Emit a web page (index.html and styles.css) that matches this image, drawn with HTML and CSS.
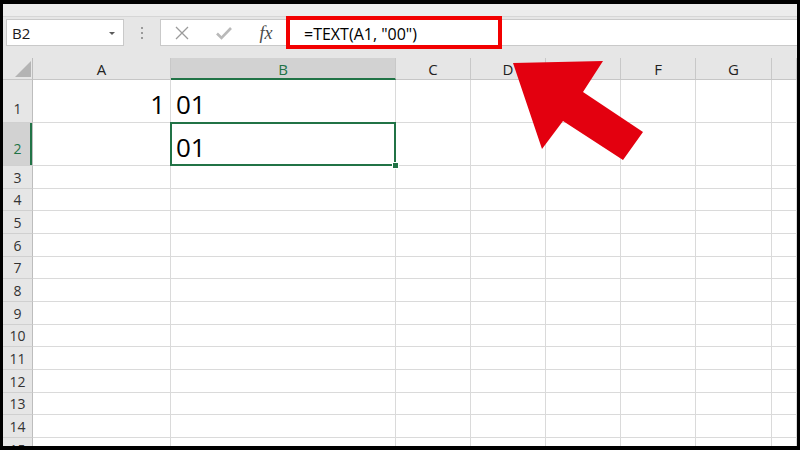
FILE: index.html
```html
<!DOCTYPE html>
<html>
<head>
<meta charset="utf-8">
<title>TEXT function</title>
<link rel="stylesheet" href="styles.css">
</head>
<body>
<div class="app">
  <div class="topstrip"></div>
  <div class="fbar">
    <div class="namebox"><span class="ref">B2</span><span class="caret"></span></div>
    <div class="grip"><i></i><i></i><i></i></div>
    <div class="formula">
      <div class="btn">
        <svg width="16" height="16" viewBox="0 0 16 16"><path d="M2 2 L14 14 M14 2 L2 14" stroke="#9b9b9b" stroke-width="1.3" fill="none"/></svg>
      </div>
      <div class="btn">
        <svg width="18" height="14" viewBox="0 0 18 14"><path d="M2 7.5 L6.5 12 L16 2" stroke="#b9b9b9" stroke-width="2.6" fill="none"/></svg>
      </div>
      <div class="btn fx">fx</div>
      <div class="input">=TEXT(A1, "00")</div>
      <div class="highlight"></div>
    </div>
  </div>
  <div class="sheet">
    <div class="corner"><span class="tri"></span></div>
    <div class="ch">A</div><div class="ch active">B</div><div class="ch">C</div><div class="ch">D</div><div class="ch">E</div><div class="ch">F</div><div class="ch">G</div><div class="ch"></div>

    <div class="rh tall">1</div><div class="c num">1</div><div class="c txt">01</div><div class="c"></div><div class="c"></div><div class="c"></div><div class="c"></div><div class="c"></div><div class="c"></div>
    <div class="rh tall active">2</div><div class="c"></div><div class="c txt sel">01</div><div class="c"></div><div class="c"></div><div class="c"></div><div class="c"></div><div class="c"></div><div class="c"></div>
    <div class="rh">3</div><div class="c"></div><div class="c"></div><div class="c"></div><div class="c"></div><div class="c"></div><div class="c"></div><div class="c"></div><div class="c"></div>
    <div class="rh">4</div><div class="c"></div><div class="c"></div><div class="c"></div><div class="c"></div><div class="c"></div><div class="c"></div><div class="c"></div><div class="c"></div>
    <div class="rh">5</div><div class="c"></div><div class="c"></div><div class="c"></div><div class="c"></div><div class="c"></div><div class="c"></div><div class="c"></div><div class="c"></div>
    <div class="rh">6</div><div class="c"></div><div class="c"></div><div class="c"></div><div class="c"></div><div class="c"></div><div class="c"></div><div class="c"></div><div class="c"></div>
    <div class="rh">7</div><div class="c"></div><div class="c"></div><div class="c"></div><div class="c"></div><div class="c"></div><div class="c"></div><div class="c"></div><div class="c"></div>
    <div class="rh">8</div><div class="c"></div><div class="c"></div><div class="c"></div><div class="c"></div><div class="c"></div><div class="c"></div><div class="c"></div><div class="c"></div>
    <div class="rh">9</div><div class="c"></div><div class="c"></div><div class="c"></div><div class="c"></div><div class="c"></div><div class="c"></div><div class="c"></div><div class="c"></div>
    <div class="rh">10</div><div class="c"></div><div class="c"></div><div class="c"></div><div class="c"></div><div class="c"></div><div class="c"></div><div class="c"></div><div class="c"></div>
    <div class="rh">11</div><div class="c"></div><div class="c"></div><div class="c"></div><div class="c"></div><div class="c"></div><div class="c"></div><div class="c"></div><div class="c"></div>
    <div class="rh">12</div><div class="c"></div><div class="c"></div><div class="c"></div><div class="c"></div><div class="c"></div><div class="c"></div><div class="c"></div><div class="c"></div>
    <div class="rh">13</div><div class="c"></div><div class="c"></div><div class="c"></div><div class="c"></div><div class="c"></div><div class="c"></div><div class="c"></div><div class="c"></div>
    <div class="rh">14</div><div class="c"></div><div class="c"></div><div class="c"></div><div class="c"></div><div class="c"></div><div class="c"></div><div class="c"></div><div class="c"></div>
    <div class="rh">15</div><div class="c"></div><div class="c"></div><div class="c"></div><div class="c"></div><div class="c"></div><div class="c"></div><div class="c"></div><div class="c"></div>
  </div>
</div>
<svg class="arrow" width="800" height="450" viewBox="0 0 800 450">
  <polygon points="513,63 603,61 583,92 643,132 623,160 563,121 542,149" fill="#e3000f"/>
</svg>
</body>
</html>
```

FILE: styles.css
```css
html, body {
  margin: 0;
  padding: 0;
}
body {
  background: #000;
  width: 800px;
  height: 450px;
  overflow: hidden;
  position: relative;
  font-family: "Open Sans", "Noto Sans", sans-serif;
}
.app {
  margin: 4px 3px;
  width: 794px;
  height: 442px;
  overflow: hidden;
  background: #e6e6e6;
  display: flex;
  flex-direction: column;
}
.topstrip {
  height: 12px;
  background: #ececec;
  border-bottom: 1px solid #d6d6d6;
  flex: none;
}
.fbar {
  height: 41px;
  box-sizing: border-box;
  padding: 2px 0 0 3px;
  display: flex;
  align-items: flex-start;
  flex: none;
  background: #e6e6e6;
}
.namebox {
  width: 118px;
  height: 27px;
  box-sizing: border-box;
  background: #fff;
  border: 1px solid #c9c9c9;
  display: flex;
  align-items: center;
  justify-content: space-between;
  padding: 1px 8px 0 5px;
}
.ref {
  font-size: 15px;
  line-height: 1;
  color: #1a1a1a;
}
.caret {
  width: 0;
  height: 0;
  border-left: 3.5px solid transparent;
  border-right: 3.5px solid transparent;
  border-top: 3.5px solid #5a5a5a;
}
.grip {
  width: 36px;
  height: 27px;
  display: flex;
  flex-direction: column;
  align-items: center;
  justify-content: center;
  gap: 3px;
}
.grip i {
  display: block;
  width: 2px;
  height: 2px;
  background: #9a9a9a;
}
.formula {
  flex: 1;
  height: 27px;
  box-sizing: border-box;
  background: #fff;
  border: 1px solid #c9c9c9;
  border-right: none;
  display: flex;
  align-items: center;
  position: relative;
}
.btn {
  width: 42px;
  height: 25px;
  display: flex;
  align-items: center;
  justify-content: center;
  flex: none;
}
.fx {
  font-family: "Liberation Serif", "DejaVu Serif", serif;
  font-style: italic;
  font-size: 18px;
  color: #4a4a4a;
  padding-top: 1px;
  box-sizing: border-box;
}
.input {
  flex: 1;
  font-size: 16px;
  line-height: 1;
  color: #000;
  padding: 2px 0 0 17px;
  white-space: pre;
}
.highlight {
  position: absolute;
  left: 125px;
  top: -4px;
  width: 216px;
  height: 33px;
  box-sizing: border-box;
  border: 4.5px solid #f20000;
}
.sheet {
  flex: 1;
  display: grid;
  grid-template-columns: 30px 138px 225px 75px 75px 75px 75px 76px 1fr;
  grid-template-rows: 22px 43px 43px;
  grid-auto-rows: 22.67px;
  background: #fff;
}
.corner {
  background: #e6e6e6;
  border-right: 1px solid #bdbdbd;
  border-bottom: 1px solid #c6c6c6;
  display: flex;
  align-items: flex-end;
  justify-content: flex-end;
  padding: 0 1px 2px 0;
}
.tri {
  width: 0;
  height: 0;
  border-left: 16px solid transparent;
  border-bottom: 16px solid #b4b4b4;
}
.ch {
  background: #e6e6e6;
  border-right: 1px solid #c8c8c8;
  border-bottom: 1px solid #c6c6c6;
  display: flex;
  align-items: center;
  justify-content: center;
  font-size: 15px;
  line-height: 1;
  color: #222;
  padding-top: 2px;
}
.ch.active {
  background: #d2d2d2;
  color: #217346;
  border-bottom: 2px solid #217346;
}
.rh {
  background: #e6e6e6;
  border-right: 1px solid #bdbdbd;
  border-bottom: 1px solid #d0d0d0;
  display: flex;
  align-items: flex-end;
  justify-content: center;
  font-size: 14px;
  line-height: 1;
  color: #333;
  padding-bottom: 3px;
}
.rh.tall {
  padding-bottom: 6px;
}
.rh.active {
  background: #d2d2d2;
  color: #217346;
  box-shadow: inset -2px 0 0 #217346;
  padding-bottom: 9px;
}
.c {
  border-right: 1px solid #dadada;
  border-bottom: 1px solid #dadada;
  display: flex;
  align-items: flex-end;
  font-size: 26px;
  line-height: 1;
  color: #000;
  padding: 0 5px 5px 5px;
  min-width: 0;
}
.c.num {
  justify-content: flex-end;
}
.c.sel {
  position: relative;
}
.c.sel::before {
  content: "";
  position: absolute;
  left: -1px;
  top: -1px;
  right: -1px;
  bottom: -1px;
  border: 2px solid #217346;
}
.c.sel::after {
  content: "";
  position: absolute;
  right: -4px;
  bottom: -4px;
  width: 5px;
  height: 5px;
  background: #217346;
  border: 1px solid #fff;
}
.arrow {
  position: absolute;
  left: 0;
  top: 0;
  pointer-events: none;
}
```
